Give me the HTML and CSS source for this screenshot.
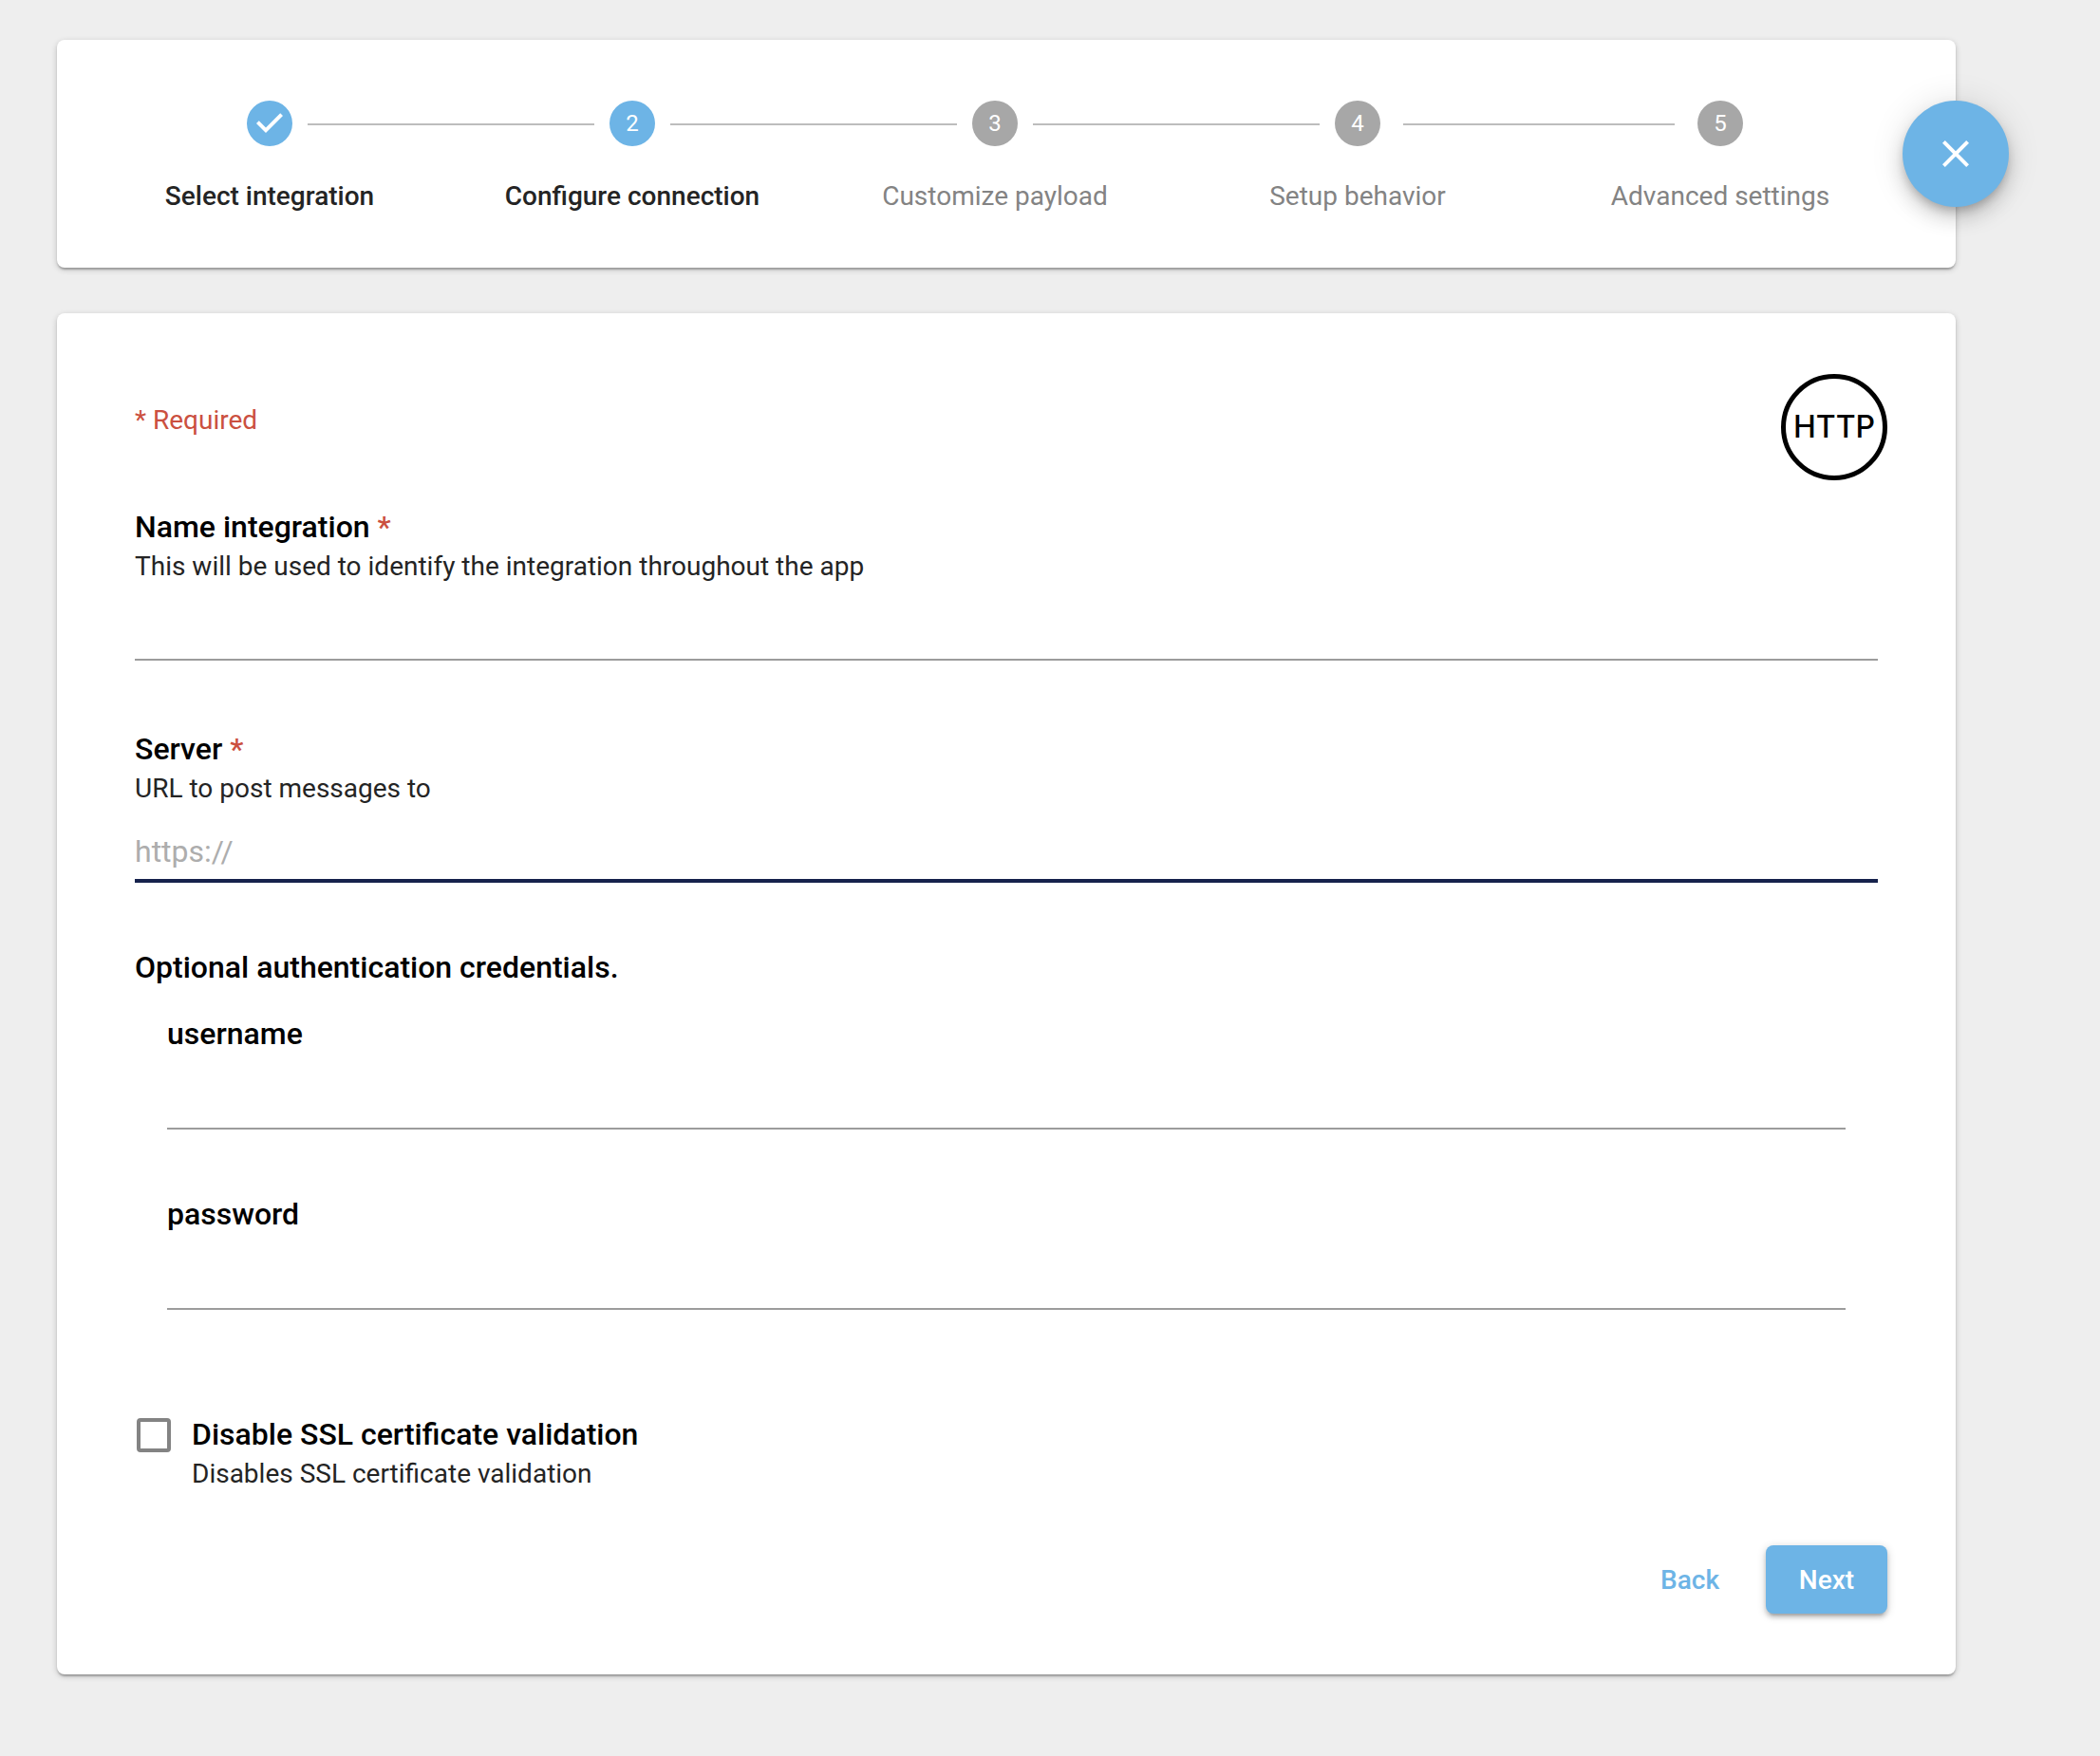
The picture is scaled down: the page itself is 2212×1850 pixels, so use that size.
FILE: index.html
```html
<!DOCTYPE html>
<html lang="en">
<head>
<meta charset="utf-8">
<meta name="viewport" content="width=device-width, initial-scale=1">
<title>Configure connection</title>
<link rel="stylesheet" href="styles.css">
</head>
<body>
<main class="page">
  <nav class="card stepper" aria-label="Progress">
    <ol class="steps">
      <li class="step step-active">
        <div class="step-track">
          <span class="step-line step-line-none"></span>
          <svg class="step-icon" viewBox="0 0 24 24" aria-hidden="true"><path d="M12 0a12 12 0 1 0 0 24 12 12 0 0 0 0-24zm-2 17l-5-5 1.4-1.4 3.6 3.6 7.6-7.6L19 8l-9 9z"/></svg>
          <span class="step-line"></span>
        </div>
        <span class="step-label">Select integration</span>
      </li>
      <li class="step step-active" aria-current="step">
        <div class="step-track">
          <span class="step-line"></span>
          <span class="step-icon step-number">2</span>
          <span class="step-line"></span>
        </div>
        <span class="step-label">Configure connection</span>
      </li>
      <li class="step">
        <div class="step-track">
          <span class="step-line"></span>
          <span class="step-icon step-number">3</span>
          <span class="step-line"></span>
        </div>
        <span class="step-label">Customize payload</span>
      </li>
      <li class="step">
        <div class="step-track">
          <span class="step-line"></span>
          <span class="step-icon step-number">4</span>
          <span class="step-line step-line-inset-start"></span>
        </div>
        <span class="step-label">Setup behavior</span>
      </li>
      <li class="step">
        <div class="step-track">
          <span class="step-line step-line-inset-end"></span>
          <span class="step-icon step-number">5</span>
          <span class="step-line step-line-none"></span>
        </div>
        <span class="step-label">Advanced settings</span>
      </li>
    </ol>
    <button class="close-button" type="button" aria-label="Close">
      <svg class="close-icon" viewBox="0 0 24 24" aria-hidden="true"><path d="M19 6.41L17.59 5 12 10.59 6.41 5 5 6.41 10.59 12 5 17.59 6.41 19 12 13.41 17.59 19 19 17.59 13.41 12z"/></svg>
    </button>
  </nav>

  <form class="card form">
    <header class="form-header">
      <p class="required-note">* Required</p>
      <div class="logo">HTTP</div>
    </header>

    <div class="form-body">
      <div class="field">
        <label class="label" for="name">Name integration <span class="asterisk">*</span></label>
        <p class="help" id="name-help">This will be used to identify the integration throughout the app</p>
        <input class="input" id="name" type="text" aria-describedby="name-help">
      </div>

      <div class="field">
        <label class="label" for="server">Server <span class="asterisk">*</span></label>
        <p class="help" id="server-help">URL to post messages to</p>
        <input class="input input-focused" id="server" type="text" placeholder="https://" aria-describedby="server-help">
      </div>

      <fieldset class="credentials">
        <legend class="label">Optional authentication credentials.</legend>
        <div class="credentials-fields">
          <div class="field">
            <label class="label" for="username">username</label>
            <input class="input" id="username" type="text">
          </div>
          <div class="field">
            <label class="label" for="password">password</label>
            <input class="input" id="password" type="password">
          </div>
        </div>
      </fieldset>

      <div class="check">
        <input class="checkbox" id="ssl" type="checkbox" aria-describedby="ssl-help">
        <div class="check-text">
          <label class="label" for="ssl">Disable SSL certificate validation</label>
          <p class="help" id="ssl-help">Disables SSL certificate validation</p>
        </div>
      </div>
    </div>

    <footer class="actions">
      <button class="button button-text" type="button">Back</button>
      <button class="button button-primary" type="submit">Next</button>
    </footer>
  </form>
</main>
</body>
</html>
```

FILE: styles.css
```css
:root {
  --blue: #6db4e6;
  --navy: #16224c;
  --red: #cb5040;
  --text: #242424;
  --muted: #838383;
}

* {
  box-sizing: border-box;
}

body {
  margin: 0;
  background: #eee;
  color: var(--text);
  font: 400 28px/42px Roboto, sans-serif;
}

p {
  margin: 0;
}

.page {
  display: flex;
  flex-direction: column;
  gap: 48px;
  padding: 42px 152px 86px 60px;
}

.card {
  background: #fff;
  border-radius: 8px;
  box-shadow: 0 2px 6px rgba(0, 0, 0, .2), 0 2px 2px rgba(0, 0, 0, .14), 0 4px 2px -2px rgba(0, 0, 0, .12);
}

/* Stepper */
.stepper {
  position: relative;
  padding: 64px 57px 54px 33px;
}

.steps {
  display: flex;
  margin: 0;
  padding: 0;
  list-style: none;
}

.step {
  display: flex;
  flex: 1 1 0;
  flex-direction: column;
  gap: 32px;
  text-align: center;
  color: var(--muted);
}

.step-active {
  color: var(--text);
  font-weight: 500;
}

.step-track {
  display: flex;
  align-items: center;
  gap: 16px;
}

.step-line {
  flex: 1 1 0;
  height: 2px;
  margin-top: 2px;
}

.step-line::before {
  content: "";
  display: block;
  height: 2px;
  background: #bdbdbd;
}

.step-line-none::before {
  background: none;
}

/* The last connector stops 8px further from its two icons. */
.step-line-inset-start::before {
  margin-left: 8px;
}

.step-line-inset-end::before {
  margin-right: 8px;
}

.step-icon {
  flex: none;
  width: 48px;
  height: 48px;
  fill: #a7a7a7;
}

.step-number {
  border-radius: 50%;
  background: #a7a7a7;
  color: #fff;
  font-size: 24px;
  font-weight: 400;
  line-height: 48px;
}

.step-active .step-icon {
  fill: var(--blue);
}

.step-active .step-number {
  background: var(--blue);
}

.close-button {
  position: absolute;
  top: 64px;
  right: -56px;
  display: flex;
  align-items: center;
  justify-content: center;
  width: 112px;
  height: 112px;
  padding: 0;
  border: 0;
  border-radius: 50%;
  background: var(--blue);
  box-shadow: 0 6px 10px -2px rgba(0, 0, 0, .2), 0 12px 20px rgba(0, 0, 0, .14), 0 2px 36px rgba(0, 0, 0, .12);
}

.close-icon {
  width: 48px;
  height: 48px;
  fill: #fff;
}

/* Form */
.form {
  padding: 64px 72px;
}

.form-header {
  display: flex;
  align-items: flex-start;
  justify-content: space-between;
  margin-bottom: 28px;
}

.required-note {
  padding: 28px 10px 0;
  color: var(--red);
}

.logo {
  width: 112px;
  height: 112px;
  border: 5px solid #000;
  border-radius: 50%;
  color: #000;
  font: 500 32px/102px Inter, sans-serif;
  text-align: center;
}

.form-body {
  padding: 0 10px;
}

.field {
  display: flex;
  flex-direction: column;
}

.field + .field {
  margin-top: 72px;
}

.label {
  display: block;
  padding: 0;
  color: #000;
  font-size: 32px;
  font-weight: 500;
  line-height: 42px;
}

.asterisk {
  color: var(--red);
}

.input {
  width: 100%;
  height: 80px;
  padding: 22px 0 6px;
  border: 0;
  border-bottom: 2px solid #9c9c9c;
  border-radius: 0;
  outline: 0;
  background: none;
  color: var(--text);
  font: 400 32px/40px Roboto, sans-serif;
}

.help + .input {
  height: 78px;
}

.input-focused {
  padding: 20px 0 4px;
  border-bottom: 4px solid var(--navy);
}

.input::placeholder {
  color: #adadad;
  opacity: 1;
}

.credentials {
  min-width: 0;
  margin: 68px 0 0;
  padding: 0;
  border: 0;
}

.credentials-fields {
  padding: 28px 34px 0;
}

.credentials-fields .field + .field {
  margin-top: 68px;
}

.check {
  display: flex;
  gap: 22px;
  margin-top: 110px;
}

.checkbox {
  appearance: none;
  flex: none;
  width: 36px;
  height: 36px;
  margin: 4px 0 0 2px;
  border: 4px solid #838383;
  border-radius: 4px;
}

.actions {
  display: flex;
  justify-content: flex-end;
  gap: 16px;
  margin-top: 54px;
}

.button {
  min-width: 128px;
  height: 72px;
  padding: 2px 16px 0;
  border: 0;
  border-radius: 8px;
  font: 500 28px/40px Roboto, sans-serif;
}

.button-text {
  background: none;
  color: var(--blue);
}

.button-primary {
  background: var(--blue);
  color: #fff;
  box-shadow: 0 2px 10px rgba(0, 0, 0, .2), 0 4px 4px rgba(0, 0, 0, .14), 0 6px 2px -4px rgba(0, 0, 0, .12);
}
```
